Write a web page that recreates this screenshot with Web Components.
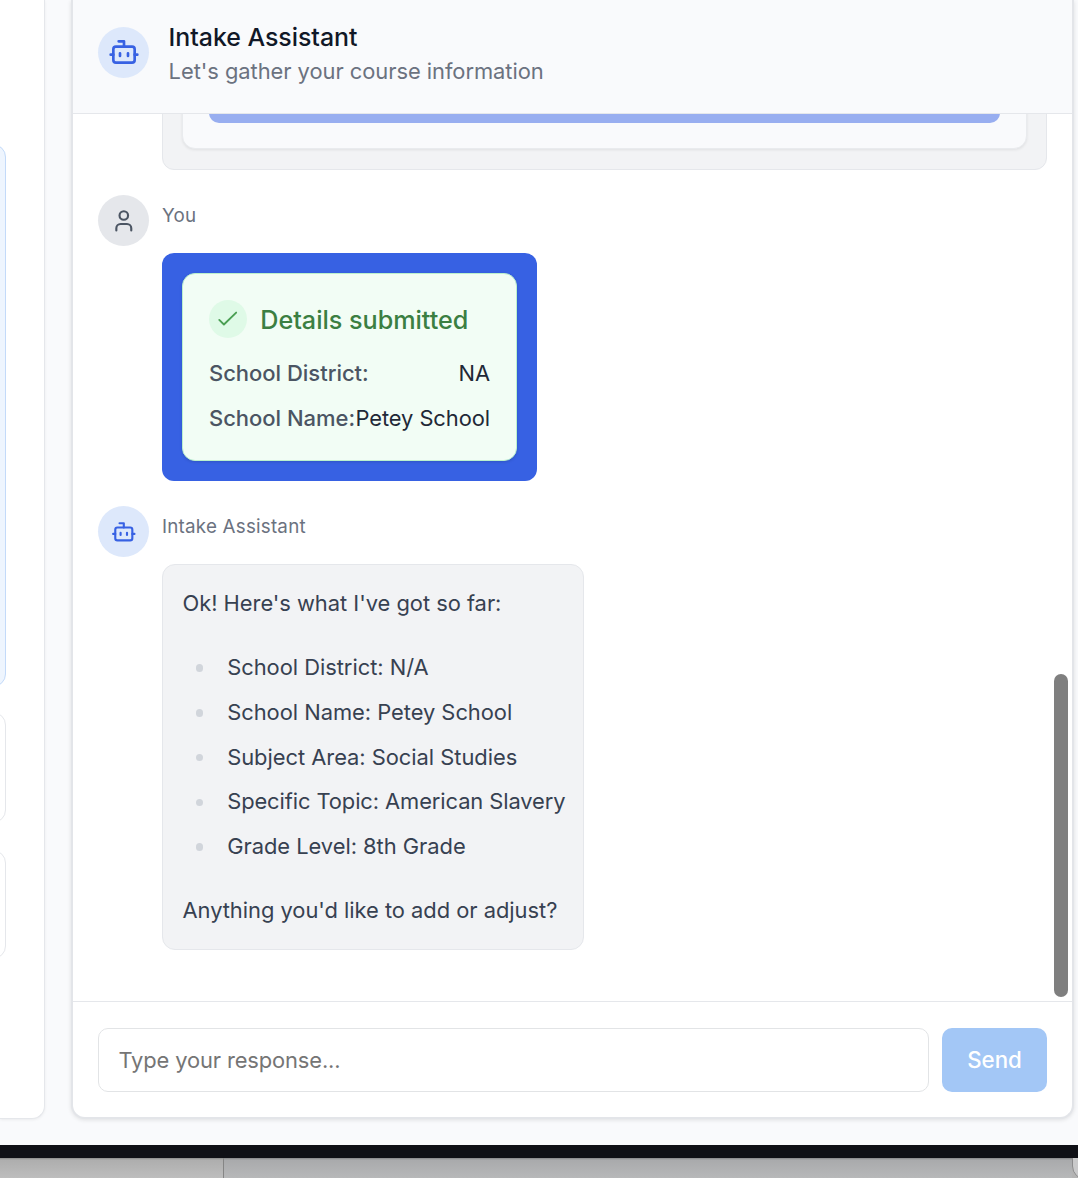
<!DOCTYPE html>
<html lang="en">
<head>
<meta charset="utf-8">
<title>Intake Assistant</title>
<style>
html,body{margin:0;height:100%;overflow:hidden}
body{font-family:Inter,"Liberation Sans",sans-serif;font-size:21.9px;letter-spacing:-.03px;color:#374151}
</style>
</head>
<body>
<intake-app></intake-app>
<script>
const define = (name, html) => customElements.define(name, class extends HTMLElement {
  connectedCallback() {
    if (this.shadowRoot) return;
    const t = document.createElement('template');
    t.innerHTML = html;
    this.attachShadow({ mode: 'open' }).append(t.content.cloneNode(true));
  }
});

define('bot-icon', `<style>:host{display:block;width:var(--s);height:var(--s)}svg{display:block}</style>
<svg width="100%" height="100%" viewBox="0 0 24 24" fill="none" stroke="#3761e3" stroke-width="2" stroke-linecap="round" stroke-linejoin="round"><path d="M12 8V4H8"/><rect x="4" y="8" width="16" height="12" rx="2"/><path d="M2 14h2M20 14h2M15 13v2M9 13v2"/></svg>`);

define('user-icon', `<style>:host{display:block;width:var(--s);height:var(--s)}svg{display:block}</style>
<svg width="100%" height="100%" viewBox="0 0 24 24" fill="none" stroke="#4b5563" stroke-width="2" stroke-linecap="round" stroke-linejoin="round"><path d="M19 21v-2a4 4 0 0 0-4-4H9a4 4 0 0 0-4 4v2"/><circle cx="12" cy="7" r="4"/></svg>`);

define('round-avatar', `<style>:host{display:flex;flex:none;align-items:center;justify-content:center;width:51.2px;height:51.2px;border-radius:50%;background:#dde8fb}
:host([kind=user]){background:#e5e7eb}</style><slot></slot>`);

define('side-card', `<style>:host{display:block;box-sizing:border-box;flex:none;border:1px solid #e5e7eb;border-radius:13px;background:#fff}
:host([active]){background:#eef5fe;border-color:#c3daf9}</style>`);

define('side-panel', `<style>:host{display:flex;flex-direction:column;box-sizing:border-box;width:45px;height:1119px;padding:144px 38px 0 0;border:solid #e5e7eb;border-width:0 1px 1px 0;border-radius:0 0 13px 0;background:#fff;box-shadow:0 1px 3px #00000010}
side-card{margin-left:-60px}.a{height:543px;margin-bottom:25px}.b{height:111px;margin-bottom:27px}.c{height:109px}</style>
<side-card class="a" active></side-card><side-card class="b"></side-card><side-card class="c"></side-card>`);

define('panel-header', `<style>:host{display:flex;box-sizing:border-box;flex:none;height:114px;gap:19.4px;padding:19.5px 25px 0;border-bottom:1px solid #e5e7eb;background:#f9fafc}
round-avatar{margin-top:7px;--s:32px}
.t{font-size:24.9px;font-weight:500;line-height:35px;letter-spacing:-.03px;color:#111827}.s{line-height:33px;color:#6b7280;letter-spacing:-.04px}</style>
<round-avatar><bot-icon></bot-icon></round-avatar>
<div><div class="t"><slot name="title"></slot></div><div class="s"><slot name="subtitle"></slot></div></div>`);

define('chat-message', `<style>:host{display:flex;flex:none;gap:12.8px;align-items:flex-start;--s:25.6px}
.col{display:flex;flex-direction:column;align-items:flex-start}
.who{height:42px;line-height:42px;margin-bottom:16px;font-size:18.8px;letter-spacing:.22px;color:#6b7280}</style>
<slot name="avatar"></slot><div class="col"><div class="who"><slot name="who"></slot></div><slot></slot></div>`);

define('form-bubble', `<style>:host{display:block;flex:none;box-sizing:border-box;margin-left:64px;padding:0 19px 20px;border:1px solid #e5e7eb;border-radius:0 0 12px 12px;background:#f2f3f5}
.card{height:149px;box-sizing:border-box;padding:0 26px 25px;border:1px solid #e9ebee;border-radius:13px;background:#f9fafc;box-shadow:0 1px 3px #00000014}
.btn{height:122px;border-radius:10px;background:#98aef0}</style><div class="card"><div class="btn"></div></div>`);

define('detail-row', `<style>:host{display:flex;justify-content:space-between;height:32px;line-height:32px;color:#1f2937;white-space:nowrap}
.k{font-size:22px;font-weight:500;color:#4b5563;letter-spacing:-.02px}.v{letter-spacing:-.08px}</style><span class="k"><slot name="key"></slot></span><span class="v"><slot></slot></span>`);

define('submitted-card', `<style>:host{display:block;box-sizing:border-box;width:375px;height:228px;padding:20px;border-radius:12px;background:#3761e3}
.in{display:flex;flex-direction:column;gap:13px;box-sizing:border-box;height:188px;padding:26px;border:1px solid #bbf0cd;border-radius:13px;background:#f2fdf5;box-shadow:0 1px 3px #0002}
.head{display:flex;align-items:center;gap:13.3px;height:38px;margin-bottom:6px;font-size:25.2px;font-weight:500;color:#3b7f42}
.ok{display:flex;align-items:center;justify-content:center;width:38px;height:38px;border-radius:50%;background:#dffae7}
.head>span:last-child{padding-top:1px;white-space:nowrap}</style>
<div class="in"><div class="head"><span class="ok"><svg width="28" height="28" viewBox="0 0 24 24" fill="none" stroke="#4a9f53" stroke-width="1.6" stroke-linecap="round" stroke-linejoin="round"><path d="M4.5 12.8l4 3.9L19 6.5"/></svg></span><span>Details submitted</span></div>
<detail-row><span slot="key">School District:</span>NA</detail-row>
<detail-row><span slot="key">School Name:</span>Petey School</detail-row></div>`);

define('bullet-line', `<style>:host{display:flex;align-items:center;height:44.76px;padding-left:13.3px;white-space:nowrap}
i{width:7.5px;height:7.5px;margin:2px 23.9px 0 0;border-radius:50%;background:#d1d5db}</style><i></i><span><slot></slot></span>`);

define('summary-bubble', `<style>:host{display:flex;flex-direction:column;gap:23.6px;box-sizing:border-box;width:422px;height:386px;padding:20.2px 0 20.8px 19.5px;border:1px solid #e5e7eb;border-radius:13px;background:#f2f3f5;color:#374151;white-space:nowrap}
p{margin:0;height:36px;line-height:36px}.n{letter-spacing:-.09px}</style>
<p>Ok! Here's what I've got so far:</p>
<div><bullet-line>School District: N/A</bullet-line><bullet-line>School Name: Petey School</bullet-line><bullet-line>Subject Area: Social Studies</bullet-line><bullet-line class="n">Specific Topic: American Slavery</bullet-line><bullet-line>Grade Level: 8th Grade</bullet-line></div>
<p>Anything you'd like to add or adjust?</p>`);

define('message-list', `<style>:host{display:flex;flex-direction:column;justify-content:flex-end;gap:25px;flex:1;min-height:0;overflow:hidden;position:relative;padding:0 25px 51px}
.thumb{position:absolute;right:4px;bottom:4px;width:14px;height:323px;border-radius:7px;background:#7f7f7f}</style>
<slot></slot><div class="thumb"></div>`);

define('message-composer', `<style>:host{display:flex;flex:none;box-sizing:border-box;height:116px;gap:13px;padding:26px 25px 25px;border-top:1px solid #e5e7eb}
.f{flex:1;box-sizing:border-box;height:64px;line-height:63px;padding-left:19.4px;border:1px solid #e2e4e6;border-radius:10px;color:#757575;letter-spacing:-.12px}
.b{width:105px;height:64px;line-height:64px;border-radius:10px;background:#a3c7f6;color:#fff;text-align:center;font-size:22.3px;font-weight:450}
</style><div class="f"><slot name="placeholder"></slot></div><div class="b"><slot name="action"></slot></div>`);

define('chat-panel', `<style>:host{display:flex;flex-direction:column;box-sizing:border-box;width:1003px;height:1119px;border:2px solid #e3e5e9;border-top:0;border-radius:0 0 14px 14px;background:#fff;overflow:hidden;box-shadow:0 1px 4px #0000001c}</style><slot></slot>`);

define('desktop-edge', `<style>:host{display:flex;box-sizing:border-box;height:33px;border-top:13px solid #0f1016;background:#b3b3b3;overflow:hidden}
.l{width:223px;border-right:1px solid #858585;background:linear-gradient(#8a8a8a,#aeaeae 2px,#bdbdbd)}
.r{flex:1;background:linear-gradient(#858688,#a9aaac 2px,#b7b8b9)}
.w{width:26px;height:40px;margin:-20px -22px 0 0;border:1px solid #8b8b8c;border-radius:20px;background:#c9c9ca}</style><div class="l"></div><div class="r"></div><div class="w"></div>`);

define('intake-app', `<style>:host{display:block;width:1078px;height:1178px;overflow:hidden;background:#f9fafc}
.row{display:flex;gap:26px;height:1145px}</style>
<div class="row"><side-panel></side-panel>
<chat-panel>
<panel-header><span slot="title">Intake Assistant</span><span slot="subtitle">Let's gather your course information</span></panel-header>
<message-list>
<form-bubble></form-bubble>
<chat-message><round-avatar slot="avatar" kind="user"><user-icon></user-icon></round-avatar><span slot="who">You</span><submitted-card></submitted-card></chat-message>
<chat-message><round-avatar slot="avatar"><bot-icon></bot-icon></round-avatar><span slot="who">Intake Assistant</span><summary-bubble></summary-bubble></chat-message>
</message-list>
<message-composer><span slot="placeholder">Type your response...</span><span slot="action">Send</span></message-composer>
</chat-panel></div>
<desktop-edge></desktop-edge>`);
</script>
</body>
</html>
